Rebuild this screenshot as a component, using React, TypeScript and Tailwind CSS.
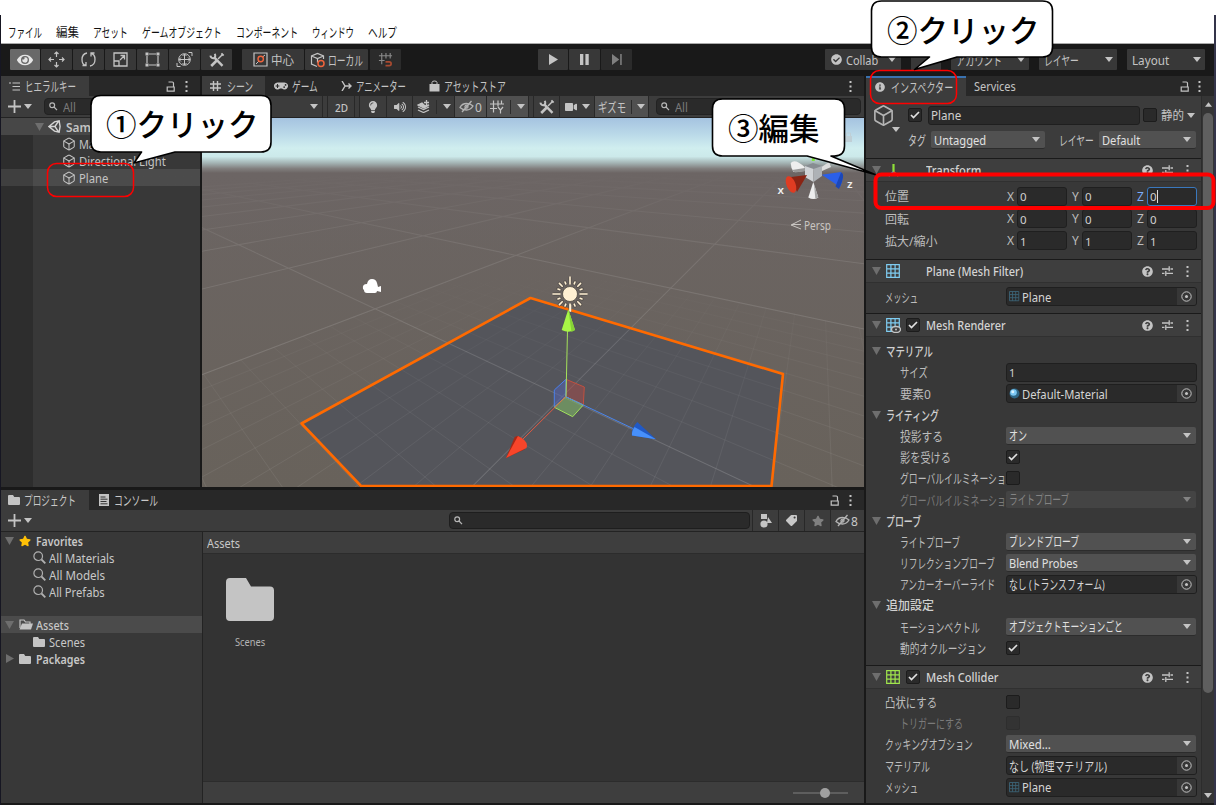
import React, { useLayoutEffect, useRef } from 'react';
import { FaEye, FaGamepad, FaInfoCircle, FaQuestionCircle, FaCheckCircle, FaLightbulb, FaVolumeUp, FaVideo, FaStar, FaTag } from 'react-icons/fa';
import { Box } from 'lucide-react';

/* Text that is condensed or widened to fill the width class it is given. Kana are set a little larger. */
function T({ c = '', children }: { c?: string; children: string }) {
  const outer = useRef<HTMLSpanElement>(null);
  const inner = useRef<HTMLSpanElement>(null);
  useLayoutEffect(() => {
    const o = outer.current;
    const i = inner.current;
    if (o && i && i.offsetWidth) i.style.transform = `scaleX(${o.clientWidth / i.offsetWidth})`;
  }, []);
  const kana = /[\u3041-\u30ff]/.test(children);
  return (
    <span ref={outer} className={`inline-block shrink-0 whitespace-nowrap pt-px ${c}`}>
      <span ref={inner} className={`inline-block origin-left ${kana ? 'text-[13px]' : ''}`}>{children}</span>
    </span>
  );
}

const Caret = ({ c = 'text-[#c4c4c4]' }: { c?: string }) => (
  <svg viewBox="0 0 8 5" className={`h-[5px] w-[8px] shrink-0 ${c}`}><path d="M0 0h8L4 5z" fill="currentColor" /></svg>
);
const Fold = () => (
  <svg viewBox="0 0 9 8" className="h-[8px] w-[9px] shrink-0 text-[#6e6e6e]"><path d="M0 0h9L4.5 8z" fill="currentColor" /></svg>
);
const Dots = () => (
  <svg viewBox="0 0 3 11" className="h-[11px] w-[3px] shrink-0" fill="#c4c4c4"><path d="M.5 0h2v2h-2zM.5 4.5h2v2h-2zM.5 9h2v2h-2z" /></svg>
);
const Lock = () => (
  <svg viewBox="0 0 10 11" className="h-[11px] w-[10px] shrink-0" fill="none" stroke="#c4c4c4" strokeWidth="1.2"><path d="M1.2 6h7v4.2h-7zM2.5 1h3.8q1.2 0 1.2 1.2V6" /></svg>
);
const Plus = () => (
  <svg viewBox="0 0 13 13" className="size-[13px] shrink-0"><path d="M6.500 0v13M0 6.500h13" stroke="#c4c4c4" strokeWidth="1.800" /></svg>
);
const Tools = () => (
  <svg viewBox="0 0 16 16" className="size-[16px] shrink-0" fill="none" stroke="#c4c4c4">
    <path d="M5 5.200l8.500 8.600" strokeWidth="2.400" /><path d="M1.400 3.600a3 3 0 003.600 2.600 3 3 0 00.6-4.400" strokeWidth="2" />
    <path d="M2.200 14L8 8.300" strokeWidth="2.600" /><path d="M9 7l5-5" strokeWidth="1.500" /><path d="M12.400 1.400l2.200 2.200" strokeWidth="1.800" />
  </svg>
);
const SearchMini = () => (
  <svg viewBox="0 0 10 9" className="h-[9px] w-[10px] shrink-0" fill="none" stroke="#b8b8b8" strokeWidth="1.200"><circle cx="3.200" cy="3.200" r="2.400" /><path d="M5 5l3 3.200" /></svg>
);
const SearchBig = () => (
  <svg viewBox="0 0 13 13" className="mb-[2px] size-[13px] shrink-0" fill="none" stroke="#b0b0b0"><circle cx="5.200" cy="5.200" r="4.300" strokeWidth="1.200" /><path d="M8.500 8.500l3.800 3.800" strokeWidth="1.800" /></svg>
);
const HiddenEye = () => (
  <svg viewBox="0 0 15 13" className="h-[13px] w-[15px] shrink-0" fill="none" stroke="#b4b4b4" strokeWidth="1.300">
    <path d="M1 7.500Q3 3.500 7.500 3.500 11.500 3.500 14 6 11.500 10 7.500 10 3.500 10 1 7.500z" /><path d="M12.500 1L3 12" /><circle cx="7.500" cy="6.700" r="1.500" />
  </svg>
);
const Folder = ({ c }: { c: string }) => (
  <svg viewBox="0 0 48 43" preserveAspectRatio="none" className={`shrink-0 ${c}`} fill="#c4c4c4"><path d="M4 0h16l5 8.500h19q4 0 4 4V39q0 4-4 4H4q-4 0-4-4V4q0-4 4-4z" /></svg>
);
const MeshGrid = ({ color, c, eye }: { color: string; c: string; eye?: boolean }) => (
  <svg viewBox="0 0 15 15" className={`shrink-0 ${c}`} fill="none" stroke={color}>
    <path d="M.7 .7h12.600v12.600H.7zM4.900 .7v12.600M9.100 .7v12.600M.7 4.900h12.600M.7 9.100h12.600" strokeWidth="1.200" />
    {eye && <><ellipse cx="10" cy="11.500" rx="4.500" ry="3" fill="#3e3e3e" stroke="#c4c4c4" strokeWidth="1.400" /><circle cx="10" cy="11.500" r="1" fill="#c4c4c4" stroke="none" /></>}
  </svg>
);
const Axes = () => (
  <svg viewBox="0 0 15 15" className="size-[15px] shrink-0" fill="none" strokeWidth="2.200"><path d="M7.500 1v8" stroke="#8fe03a" /><path d="M7.500 9l-5 4" stroke="#4a8ae0" /><path d="M7.500 9l5 4" stroke="#e0533a" /></svg>
);
const Sliders = () => (
  <svg viewBox="0 0 11 10" className="h-[10px] w-[11px] shrink-0" stroke="#c4c4c4" strokeWidth="1.300"><path d="M0 3h6.500M8.500 3H11M7.200 .3v5M0 7.300h2.500M4.500 7.300H11M3.800 5v5" /></svg>
);
const HashGrid = () => (
  <svg viewBox="0 0 14 13" className="h-[14px] w-[14px] shrink-0" fill="none" stroke="#c4c4c4" strokeWidth="1.200">
    <path d="M3.500 0v12M8 0v6M11.500 0v4M0 3.500h14M0 8h7M8 6.500l2.500 3v3.500M13 6.500l-2.500 3" />
  </svg>
);

const Check = ({ on, dim }: { on?: boolean; dim?: boolean }) => (
  <span className={`flex size-[14px] shrink-0 items-center justify-center rounded-[2px] border ${dim ? 'border-[#2e2e2e] bg-[#333]' : 'border-[#1c1c1c] bg-[#2a2a2a]'}`}>
    {on && <svg viewBox="0 0 10 8" className="h-[8px] w-[10px]" fill="none" stroke="#e0e0e0" strokeWidth="1.700"><path d="M1 4l2.500 2.500L9 1" /></svg>}
  </span>
);
const Select = ({ c, children, dim }: { c: string; children: React.ReactNode; dim?: boolean }) => (
  <span className={`flex h-[18px] shrink-0 items-center justify-between rounded-[2px] border-b pl-[3px] pr-[5px] ${c} ${dim ? 'border-[#383838] bg-[#444] text-[#838383]' : 'border-[#2c2c2c] bg-[#515151] text-[#e0e0e0]'}`}>
    {children}<Caret c={dim ? 'text-[#838383]' : 'text-[#c4c4c4]'} />
  </span>
);
const Field = ({ c, children, on }: { c: string; children?: React.ReactNode; on?: boolean }) => (
  <span className={`flex h-[19px] shrink-0 items-center rounded-[3px] border bg-[#2a2a2a] pl-[2px] text-[#d0d0d0] ${c} ${on ? 'border-[#3a78bd]' : 'border-[#1f1f1f]'}`}>{children}</span>
);
const ObjField = ({ children }: { children: React.ReactNode }) => (
  <span className="flex h-[19px] w-[191px] shrink-0 items-center gap-[2px] overflow-hidden rounded-[3px] border border-[#1f1f1f] bg-[#2a2a2a] pl-[2px] text-[#d4d4d4]">
    {children}
    <span className="ml-auto flex h-full w-[19px] items-center justify-center bg-[#373737]">
      <svg viewBox="0 0 11 11" className="size-[11px]" fill="none" stroke="#c4c4c4"><circle cx="5.500" cy="5.500" r="4.700" /><circle cx="5.500" cy="5.500" r="1.500" fill="#c4c4c4" stroke="none" /></svg>
    </span>
  </span>
);
const Row = ({ label, w, nest, dim, h = 'h-[21.2px]', children }: { label: string; w: string; nest?: boolean; dim?: boolean; h?: string; children?: React.ReactNode }) => (
  <div className={`flex items-center ${h} ${dim ? 'text-[#7a7a7a]' : 'text-[#bdbdbd]'}`}>
    <span className={`flex w-[140px] shrink-0 items-center overflow-hidden ${nest ? 'pl-[34px]' : 'pl-[19px]'}`}><T c={w}>{label}</T></span>
    {children}
  </div>
);
const FoldRow = ({ label, w }: { label: string; w: string }) => (
  <div className="flex h-[21.2px] items-center gap-[5px] pl-[6px] font-medium text-[#d0d0d0]"><Fold /><T c={w}>{label}</T></div>
);
const Head = ({ icon, title, w, check }: { icon: React.ReactNode; title: string; w: string; check?: boolean }) => (
  <div className="flex h-[24px] items-center border-b border-t border-b-[#303030] border-t-[#1a1a1a] bg-[#3e3e3e] pl-[6px] pr-[12px]">
    <Fold />
    <span className="ml-[5px] flex w-[20px]">{icon}</span>
    <span className="flex w-[20px]">{check && <Check on />}</span>
    <span className="flex font-medium text-[#d4d4d4]"><T c={w}>{title}</T></span>
    <span className="ml-auto flex items-center gap-[9px]"><FaQuestionCircle className="size-[11px] text-[#c4c4c4]" /><Sliders /><span className="flex w-[7px] justify-end"><Dots /></span></span>
  </div>
);
const Vec = ({ label, w, v, h, active }: { label: string; w: string; v: string; h: string; active?: boolean }) => (
  <Row label={label} w={w} h={h}>
    {['X', 'Y', 'Z'].map((a) => (
      <span key={a} className="flex w-[65px] shrink-0 items-center">
        <span className={`w-[11px] pl-px ${active && a === 'Z' ? 'text-[#7baefa]' : ''}`}>{a}</span>
        <Field c="w-[50px]" on={active && a === 'Z'}>
          <span className="pt-px text-[11.5px]">{v}</span>{active && a === 'Z' && <span className="h-[13px] w-px bg-[#ddd]" />}
        </Field>
      </span>
    ))}
  </Row>
);

function Inspector() {
  return (
    <section className="flex w-[348px] shrink-0 flex-col bg-[#383838]">
      <div className="flex h-[20px] shrink-0 items-center bg-[#282828] text-[#c4c4c4]">
        <div className="flex h-full w-[100px] items-center gap-[6px] border-t-2 border-[#3a72b0] bg-[#3c3c3c] pl-[9px]"><FaInfoCircle className="size-[10px]" /><T c="w-[62px]">インスペクター</T></div>
        <T c="ml-[8px] w-[42px]">Services</T>
        <span className="ml-auto mr-[13px] flex items-center gap-[8px]"><Lock /><Dots /></span>
      </div>
      <div className="flex min-h-0 flex-1">
        <div className="w-[335px] shrink-0">
          <div className="flex h-[62px] bg-[#3c3c3c] pt-[8px]">
            <div className="flex w-[42px] shrink-0 flex-col pl-[6px]">
              <Box className="size-[23px] text-[#b4b4b4]" strokeWidth={1.7} />
              <span className="ml-[20px] flex"><Caret /></span>
            </div>
            <div className="flex flex-col gap-[3px] text-[#c4c4c4]">
              <div className="flex h-[22px] items-center">
                <Check on />
                <Field c="ml-[6px] w-[212px]"><T c="w-[30px]">Plane</T></Field>
                <span className="ml-[3px] mr-[4px]"><Check /></span>
                <T c="w-[23px]">静的</T><span className="ml-[3px] flex"><Caret /></span>
              </div>
              <div className="flex h-[22px] items-center">
                <T c="w-[18px]">タグ</T>
                <span className="ml-[5px]"><Select c="w-[114px]"><T c="w-[52px]">Untagged</T></Select></span>
                <T c="ml-[14px] w-[35px]">レイヤー</T>
                <span className="ml-[5px]"><Select c="w-[97px]"><T c="w-[38px]">Default</T></Select></span>
              </div>
            </div>
          </div>
          <Head icon={<Axes />} title="Transform" w="w-[55px]" />
          <div className="h-[77px] pt-[3px]">
            <Vec label="位置" w="w-[24px]" v="0" h="h-[22px]" active />
            <Vec label="回転" w="w-[24px]" v="0" h="h-[23px]" />
            <Vec label="拡大/縮小" w="w-[52px]" v="1" h="h-[21px]" />
          </div>
          <Head icon={<MeshGrid color="#7fcdf2" c="size-[15px]" />} title="Plane (Mesh Filter)" w="w-[97px]" />
          <div className="h-[30px] pt-[3px]">
            <Row label="メッシュ" w="w-[33px]"><ObjField><MeshGrid color="#3c6478" c="size-[11px]" /><T c="w-[29px]">Plane</T></ObjField></Row>
          </div>
          <Head icon={<MeshGrid color="#7fcdf2" c="size-[15px]" eye />} title="Mesh Renderer" w="w-[80px]" check />
          <div className="h-[328px] pt-[3.6px]">
            <FoldRow label="マテリアル" w="w-[47px]" />
            <Row nest label="サイズ" w="w-[28px]"><Field c="w-[191px]"><span className="pt-px text-[11px]">1</span></Field></Row>
            <Row nest label="要素0" w="w-[31px]">
              <ObjField>
                <svg viewBox="0 0 11 11" className="size-[11px] shrink-0"><circle cx="5.500" cy="5.500" r="5" fill="#2f6685" /><circle cx="4.500" cy="4.500" r="3.300" fill="#7cc8f4" /><circle cx="3.800" cy="3.800" r="1.500" fill="#d9f2ff" /></svg>
                <T c="w-[86px]">Default-Material</T>
              </ObjField>
            </Row>
            <FoldRow label="ライティング" w="w-[53px]" />
            <Row nest label="投影する" w="w-[43px]"><Select c="w-[190px]"><T c="w-[18px]">オン</T></Select></Row>
            <Row nest label="影を受ける" w="w-[51px]"><Check on /></Row>
            <Row nest label="グローバルイルミネーショ" w="w-[106px]"><Check /></Row>
            <Row nest dim label="グローバルイルミネーショ" w="w-[106px]"><Select dim c="w-[190px]"><T c="w-[60px]">ライトプローブ</T></Select></Row>
            <FoldRow label="プローブ" w="w-[35px]" />
            <Row nest label="ライトプローブ" w="w-[60px]"><Select c="w-[190px]"><T c="w-[70px]">ブレンドプローブ</T></Select></Row>
            <Row nest label="リフレクションプローブ" w="w-[95px]"><Select c="w-[190px]"><T c="w-[69px]">Blend Probes</T></Select></Row>
            <Row nest label="アンカーオーバーライド" w="w-[95px]"><ObjField><T c="w-[96px]">なし (トランスフォーム)</T></ObjField></Row>
            <FoldRow label="追加設定" w="w-[48px]" />
            <Row nest label="モーションベクトル" w="w-[80px]"><Select c="w-[190px]"><T c="w-[114px]">オブジェクトモーションごと</T></Select></Row>
            <Row nest label="動的オクルージョン" w="w-[86px]"><Check on /></Row>
          </div>
          <Head icon={<MeshGrid color="#a0e64c" c="size-[15px]" />} title="Mesh Collider" w="w-[72px]" check />
          <div className="pt-[2px]">
            <Row h="h-[21.4px]" label="凸状にする" w="w-[52px]"><Check /></Row>
            <Row h="h-[21.4px]" nest dim label="トリガーにする" w="w-[63px]"><Check dim /></Row>
            <Row h="h-[21.4px]" label="クッキングオプション" w="w-[88px]"><Select c="w-[190px]"><T c="w-[42px]">Mixed...</T></Select></Row>
            <Row h="h-[21.4px]" label="マテリアル" w="w-[45px]"><ObjField><T c="w-[98px]">なし (物理マテリアル)</T></ObjField></Row>
            <Row h="h-[21.4px]" label="メッシュ" w="w-[33px]"><ObjField><MeshGrid color="#3c6478" c="size-[11px]" /><T c="w-[29px]">Plane</T></ObjField></Row>
          </div>
        </div>
        <div className="flex flex-1 flex-col items-center border-l border-[#2c2c2c] bg-[#353535] pb-[5px] pt-[6px]">
          <svg viewBox="0 0 8 5" className="h-[5px] w-[7px]"><path d="M0 5h8L4 0z" fill="#c4c4c4" /></svg>
          <div className="mt-[6px] h-[580px] w-[10px] rounded-[5px] bg-[#5f5f5f]" />
          <span className="mt-auto flex"><Caret /></span>
        </div>
      </div>
    </section>
  );
}

/* Ground plane projection: unit square (the 10 x 10 mesh) to screen. */
const quad = [[530, 298], [300, 423.5], [718, 872.3], [786.5, 373.5]];
const [[x0, y0], [x1, y1], [x2, y2], [x3, y3]] = quad;
const sx = x0 - x1 + x2 - x3;
const sy = y0 - y1 + y2 - y3;
const det = (x1 - x2) * (y3 - y2) - (x3 - x2) * (y1 - y2);
const gg = (sx * (y3 - y2) - (x3 - x2) * sy) / det;
const hh = ((x1 - x2) * sy - sx * (y1 - y2)) / det;
const depth = (u: number, v: number) => 1 + gg * u + hh * v;
const project = (u: number, v: number) => {
  const w = depth(u, v);
  return [((x1 - x0 + gg * x1) * u + (x3 - x0 + hh * x3) * v + x0) / w, ((y1 - y0 + gg * y1) * u + (y3 - y0 + hh * y3) * v + y0) / w];
};
const NEAR = 0.15;
function segment(a: number[], b: number[]) {
  const wa = depth(a[0], a[1]);
  const wb = depth(b[0], b[1]);
  if (wa < NEAR && wb < NEAR) return '';
  const t = (NEAR - wa) / (wb - wa);
  const m = [a[0] + (b[0] - a[0]) * t, a[1] + (b[1] - a[1]) * t];
  const p = project(...((wa < NEAR ? m : a) as [number, number]));
  const q = project(...((wb < NEAR ? m : b) as [number, number]));
  return `M${p[0].toFixed(1)} ${p[1].toFixed(1)}L${q[0].toFixed(1)} ${q[1].toFixed(1)}`;
}
function gridLines(step: number, from: number, to: number) {
  let d = '';
  for (let k = from; k <= to + 0.001; k += step) d += segment([k, from], [k, to]) + segment([from, k], [to, k]);
  return d;
}
const minor = gridLines(0.1, -0.5, 2.5);
const major = gridLines(1, -9.5, 4.5);
const rays = Array.from({ length: 16 }, (_, i) => i * 22.5);

function SceneView() {
  return (
    <svg viewBox="202 118 662 369" className="block h-[369px] w-[662px] shrink-0">
      <defs>
        <linearGradient id="sky" x1="0" y1="0" x2="0" y2="1">
          <stop offset="0" stopColor="#a5c3e0" /><stop offset=".28" stopColor="#b9d8e8" /><stop offset=".55" stopColor="#d0eeef" /><stop offset=".7" stopColor="#cce9ea" />
          <stop offset=".82" stopColor="#a3b3b3" /><stop offset=".92" stopColor="#817f7e" /><stop offset="1" stopColor="#6c6564" />
        </linearGradient>
        <linearGradient id="ground" x1="0" y1="0" x2="0" y2="1"><stop offset="0" stopColor="#6c6564" /><stop offset="1" stopColor="#68625b" /></linearGradient>
        <linearGradient id="fade" x1="0" y1="0" x2="0" y2="1"><stop offset="0" stopColor="#6c6564" /><stop offset=".25" stopColor="#6c6564" stopOpacity=".75" /><stop offset="1" stopColor="#6b6562" stopOpacity="0" /></linearGradient>
        <linearGradient id="near" x1="0" y1="0" x2="0" y2="1"><stop offset="0" stopColor="#fff" stopOpacity="0" /><stop offset="1" stopColor="#fff" stopOpacity=".055" /></linearGradient>
        <linearGradient id="minor" gradientUnits="userSpaceOnUse" x1="0" y1="270" x2="0" y2="487"><stop offset="0" stopColor="#fff" stopOpacity="0" /><stop offset=".4" stopColor="#fff" stopOpacity=".035" /><stop offset="1" stopColor="#fff" stopOpacity=".07" /></linearGradient>
      </defs>
      <rect x="202" y="118" width="662" height="369" fill="url(#ground)" />
      <path d="M530 298L300 423.500L360 487H771.500L783 374z" fill="#54555b" />
      <path d={minor} stroke="url(#minor)" strokeWidth="1" />
      <path d={major} stroke="#fff" strokeOpacity=".1" strokeWidth="1.100" />
      <rect x="202" y="172" width="662" height="90" fill="url(#fade)" />
      <rect x="202" y="118" width="662" height="55" fill="url(#sky)" />
      <path d="M530.500 298L301.500 423.500L361 486H771.500L783 374Z" fill="none" stroke="#ff6a00" strokeWidth="2.600" strokeLinejoin="round" />
      <path d="M363 289q-1-5 4-5 1-5 5-5t5 4l1 4 3-1v6l-4-1q0 2-2 2h-8q-3 0-3-3z" fill="#fff" />
      <g stroke="#4b4640" strokeWidth="3.400" strokeLinecap="round" opacity=".6">{rays.map((r, i) => <path key={r} d={i % 2 ? 'M570 283v-2' : i % 4 ? 'M570 283v-4' : 'M570 283v-5'} transform={`rotate(${r} 570 294)`} />)}</g>
      <g stroke="#fff0d2" strokeWidth="1.600" strokeLinecap="round">{rays.map((r, i) => <path key={r} d={i % 2 ? 'M570 283v-2' : i % 4 ? 'M570 283v-4' : 'M570 284v-7'} transform={`rotate(${r} 570 294)`} />)}<path d="M570.500 311v-6" /></g>
      <circle cx="570" cy="294" r="7.500" fill="#fff0d2" stroke="#4b4640" strokeWidth=".8" />
      <path d="M566 379.300L584.300 387 583.300 405 565.700 396.700z" fill="#b24a45" fillOpacity=".45" stroke="#c2503f" />
      <path d="M566 379.300L554.300 390V407.300L565.700 396.700z" fill="#5164b8" fillOpacity=".5" stroke="#4a80ec" />
      <path d="M565.700 396.700L583.300 405 572.700 416.700 554.300 407.300z" fill="#7fb365" fillOpacity=".6" stroke="#a0e05c" />
      <path d="M566 396.700L567.500 330" stroke="#a5e25a" /><path d="M565.700 396.700L520 442" stroke="#df5a43" /><path d="M565.700 396.700L634 429" stroke="#4a86ee" />
      <path d="M568.300 309.300L561.700 330q6.500 3.500 13.300 0z" fill="#a8f646" /><path d="M568.300 309.300L571.500 332 575 330z" fill="#86d336" />
      <path d="M506 458L514.500 437.500q3-4 7 2l3 10z" fill="#a92715" /><path d="M506 458L518 436q11 5 8.500 12z" fill="#f8452a" />
      <path d="M656 439.300L637.300 422q-6 6-5.500 13.500z" fill="#2159c4" /><path d="M656 439.300L634.500 427q-3 4-2.500 8.500z" fill="#4790fb" />
      <path d="M813.300 161v-4" stroke="#7fe53c" strokeWidth="3" />
      <path d="M790.700 163q4-5 14 4v4l-11 1q-3-4-3-9z" fill="#eee" /><path d="M792 170l13-2v3l-10 1.500z" fill="#999" /><path d="M820 168l9-6 2 5-9 4z" fill="#ddd" />
      <path d="M805 166l8-3 9 3-2 2-7 2z" fill="#888d92" /><path d="M805 166l8.500 3v13l-8.500-5z" fill="#d0d3d6" /><path d="M813.500 169l8.500-3v10l-8.500 6z" fill="#aeb2b6" />
      <path d="M813.300 182l-5 15.500q5 3 10 0z" fill="#ededed" /><path d="M814 184l4.300 13.500-3 1z" fill="#a5a5a5" />
      <path d="M807 175l-16 2 6 15z" fill="#8a2414" /><ellipse cx="791" cy="184.500" rx="4.500" ry="8.800" fill="#df3c22" transform="rotate(-22 791 184.500)" />
      <path d="M821.700 174.700L841 172q4 5-1 15z" fill="#2b5fe8" /><path d="M841 172.500q5 1-2 16.500l-3.500-2.500z" fill="#1b47b8" />
      <g fill="#eee" fontFamily="'Noto Sans', sans-serif" fontSize="11.500" fontWeight="600"><text x="777.500" y="194">x</text><text x="847" y="188">z</text></g>
      <path d="M801 220l-10 5 10 4M801 224.500h-9" stroke="#c9c5c1" fill="none" />
      <text x="804" y="230" fill="#c9c5c1" fontFamily="'Noto Sans', sans-serif" fontSize="12" textLength="27" lengthAdjust="spacingAndGlyphs">Persp</text>
      <g fill="#bfcfd6"><rect x="845" y="136" width="7" height="6" /><path d="M846.500 136v-3h4v3" fill="none" stroke="#bfcfd6" /></g>
    </svg>
  );
}

const Btn = ({ c = 'w-[31px]', bg = 'bg-[#383838]', children }: { c?: string; bg?: string; children?: React.ReactNode }) => (
  <span className={`flex h-[21px] shrink-0 items-center justify-center rounded-[1px] ${c} ${bg}`}>{children}</span>
);
const ic = 'size-[17px]';

function Toolbar() {
  return (
    <div className="flex h-[32px] shrink-0 items-center bg-[#191919] pb-px pl-[9px] text-[#c4c4c4]">
      <div className="flex gap-px">
        <Btn c="w-[30px]" bg="bg-[#696969]"><FaEye className="size-[16px] text-[#e6e6e6]" /></Btn>
        <Btn><svg viewBox="0 0 17 17" className={ic} fill="none" stroke="#c4c4c4" strokeWidth="1.200"><path d="M8.500 1v5M8.500 11v5M1 8.500h5M11 8.500h5M6.500 3l2-2 2 2M6.500 14l2 2 2-2M3 6.500l-2 2 2 2M14 6.500l2 2-2 2" /></svg></Btn>
        <Btn><svg viewBox="0 0 17 17" className={ic} fill="none" stroke="#c4c4c4" strokeWidth="1.300"><path d="M7 2Q2 3 2 8.500t4 6M2.500 14.500H6V11M10 15q5-1 5-6.500t-4-6M14.500 2H11v3.500" /></svg></Btn>
        <Btn><svg viewBox="0 0 17 17" className={ic} fill="none" stroke="#c4c4c4" strokeWidth="1.300"><path d="M2 2h13v13H2zM2 10h5v5M8 9l4.500-4.500M8.500 4.500h4v4" /></svg></Btn>
        <Btn><svg viewBox="0 0 17 17" className={ic} fill="none" stroke="#c4c4c4" strokeWidth="1.200"><path d="M3 5v7M14 5v7M5 3h7M5 14h7" /><path d="M1.500 1.500h3v3h-3zM12.500 1.500h3v3h-3zM1.500 12.500h3v3h-3zM12.500 12.500h3v3h-3z" fill="#c4c4c4" stroke="none" /></svg></Btn>
        <Btn><svg viewBox="0 0 17 17" className={ic} fill="none" stroke="#c4c4c4"><circle cx="8.500" cy="8.500" r="5.800" /><path d="M8.500 3v11M3 8.500h11M6.500 5l2-2 2 2M6.500 12l2 2 2-2M5 6.500l-2 2 2 2M12 6.500l2 2-2 2M12.500 1.500H16V5M1 12v3.500h3.500" /></svg></Btn>
        <Btn><Tools /></Btn>
      </div>
      <div className="ml-[10px] flex gap-[1px]">
        <Btn c="w-[62px] gap-[3px]">
          <svg viewBox="0 0 15 15" className="size-[15px] shrink-0" fill="none"><path d="M1 1h13v13H1z" stroke="#c4c4c4" strokeWidth="1.200" /><path d="M3 12l3-3M9.500 5L12 3" stroke="#c4c4c4" /><circle cx="7.700" cy="7" r="2.700" stroke="#f0643c" strokeWidth="1.400" /></svg>
          <T c="w-[23px]">中心</T>
        </Btn>
        <Btn c="w-[63px] gap-[2px]">
          <svg viewBox="0 0 16 16" className="size-[16px] shrink-0" fill="none" stroke="#c4c4c4" strokeWidth="1.200"><path d="M7 14.500L1.500 12V4L7.500 1.500 13.500 4v3M1.500 4l6 2.500 6-2.500M7.500 6.500v4" /><circle cx="11" cy="11.500" r="3" stroke="#f0643c" strokeWidth="1.500" /></svg>
          <T c="w-[35px]">ローカル</T>
        </Btn>
        <span className="ml-px flex"><Btn bg="bg-[#2b2b2b]"><svg viewBox="0 0 16 16" className="size-[15px]" fill="none" stroke="#8a8a8a" strokeWidth="1.200"><path d="M4 1v12M8.500 1v6M13 1v6M1 4h14M1 9h6" /><path d="M8 10.500h4q2 0 2 2t-2 2H8" stroke="#a84a30" strokeWidth="1.800" /></svg></Btn></span>
      </div>
      <div className="ml-[137px] flex gap-px">
        <Btn c="w-[30px]"><svg viewBox="0 0 10 12" className="h-[11px] w-[9px]"><path d="M0 0l10 6-10 6z" fill="#c4c4c4" /></svg></Btn>
        <Btn><svg viewBox="0 0 10 12" className="h-[11px] w-[9px]"><path d="M0 0h3.700v12H0zM6 0h3.700v12H6z" fill="#c4c4c4" /></svg></Btn>
        <Btn bg="bg-[#2b2b2b]"><svg viewBox="0 0 11 12" className="h-[11px] w-[10px]"><path d="M0 0l8 6-8 6zM9 0h1.700v12H9z" fill="#808080" /></svg></Btn>
      </div>
      <div className="ml-[193px] flex gap-[10px]">
        <Btn c="w-[76px] gap-[4px]"><FaCheckCircle className="size-[11px]" /><T c="w-[32px]">Collab</T><span className="ml-[6px] flex"><Caret /></span></Btn>
        <Btn c="w-[30px]" />
        <Btn c="w-[78px] gap-[15px]"><T c="w-[46px]">アカウント</T><Caret /></Btn>
        <Btn c="w-[78px] gap-[26px]"><T c="w-[35px]">レイヤー</T><Caret /></Btn>
        <Btn c="w-[78px] gap-[24px]"><T c="w-[37px]">Layout</T><Caret /></Btn>
      </div>
    </div>
  );
}

function Hierarchy() {
  return (
    <section className="flex w-[199px] shrink-0 flex-col bg-[#383838] text-[#c4c4c4]">
      <div className="flex h-[20px] shrink-0 items-center bg-[#282828]">
        <div className="flex h-full w-[88px] items-center gap-[5px] bg-[#3c3c3c] pl-[8px]">
          <svg viewBox="0 0 11 9" className="h-[9px] w-[11px]" stroke="#c4c4c4" strokeWidth="1.200"><path d="M0 1h2M3.500 1H11M3.500 4.500H11M3.500 8H11" /></svg>
          <T c="w-[51px]">ヒエラルキー</T>
        </div>
        <span className="ml-auto mr-[12px] flex items-center gap-[9px]"><Lock /><Dots /></span>
      </div>
      <div className="flex h-[22px] shrink-0 items-center border-b border-[#232323] bg-[#3c3c3c] pl-[7px]">
        <Plus /><span className="ml-[3px] flex"><Caret /></span>
        <span className="ml-[12px] flex h-[17px] w-[150px] items-center gap-[4px] rounded-[4px] border border-[#222] bg-[#2a2a2a] pl-[4px] text-[#7a7a7a]"><SearchMini /><T c="w-[13px]">All</T></span>
      </div>
      <div className="flex flex-1 flex-col bg-linear-to-r from-[#2d2d2d] from-[32px] to-[#383838] to-[32px]">
        <div className="flex h-[17px] items-center bg-[#474747] pl-[34px] font-semibold">
          <Fold />
          <svg viewBox="0 0 14 14" className="ml-[4px] size-[13px]" fill="none" stroke="#d4d4d4" strokeWidth="1.500"><path d="M1 7l6-5 5-1 1 6-1 6-5-1zM1 7h6.500M7.500 7l4-6M7.500 7l4 6" /></svg>
          <T c="ml-[5px] w-[76px]">SampleScene</T>
        </div>
        <div className="flex h-[17px] items-center gap-[3px] pl-[61px]"><Box className="size-[14px]" strokeWidth={1.8} /><T c="w-[68px]">Main Camera</T></div>
        <div className="flex h-[17px] items-center gap-[3px] pl-[61px]"><Box className="size-[14px]" strokeWidth={1.8} /><T c="w-[87px]">Directional Light</T></div>
        <div className="flex h-[17px] items-center gap-[3px] bg-linear-to-r from-[#3f3f3f] from-[32px] to-[#4b4b4b] to-[32px] pl-[61px]"><Box className="size-[14px]" strokeWidth={1.8} /><T c="w-[29px]">Plane</T></div>
      </div>
    </section>
  );
}

const Cell = ({ c, on, children }: { c: string; on?: boolean; children?: React.ReactNode }) => (
  <span className={`flex h-full shrink-0 items-center justify-center border-r border-[#282828] ${c} ${on ? 'bg-[#505050]' : 'bg-[#3c3c3c]'}`}>{children}</span>
);
const Bar = () => <span className="h-[14px] w-px shrink-0 bg-[#2c2c2c]" />;

function Scene() {
  return (
    <section className="flex w-[662px] shrink-0 flex-col bg-[#3c3c3c] text-[#c4c4c4]">
      <div className="flex h-[20px] shrink-0 items-center bg-[#282828]">
        <div className="flex h-full w-[63px] items-center gap-[6px] bg-[#3c3c3c] pl-[8px]">
          <svg viewBox="0 0 11 10" className="h-[10px] w-[11px]" stroke="#c4c4c4" strokeWidth="1.400"><path d="M3.500 0v10M7.500 0v10M0 3h11M0 7h11" /></svg><T c="w-[26px]">シーン</T>
        </div>
        <FaGamepad className="ml-[9px] size-[14px]" /><T c="ml-[4px] w-[26px]">ゲーム</T>
        <svg viewBox="0 0 11 10" className="ml-[23px] h-[10px] w-[11px]" fill="none" stroke="#c4c4c4" strokeWidth="1.400"><path d="M1 0l3 5-3 5M4 5h6M7.500 2.500L10 5 7.500 7.500" /></svg><T c="ml-[4px] w-[50px]">アニメーター</T>
        <svg viewBox="0 0 11 12" className="ml-[23px] h-[12px] w-[11px]" fill="none"><path d="M.5 4h10v7.500H.5z" fill="#c4c4c4" /><path d="M3 6V2.500Q3 1 5.500 1T8 2.500V6" stroke="#c4c4c4" /></svg><T c="ml-[4px] w-[62px]">アセットストア</T>
        <span className="ml-auto mr-[12px] flex"><Dots /></span>
      </div>
      <div className="flex h-[22px] shrink-0 items-center border-b border-[#232323]">
        <Cell c="w-[121px] justify-end! pr-[4px]"><Caret /></Cell><Cell c="w-[5px]" />
        <Cell c="w-[27px] text-[11.5px] font-medium"><T c="w-[13px]">2D</T></Cell><Cell c="w-[5px]" />
        <Cell c="w-[27px]"><FaLightbulb className="size-[12px]" /></Cell>
        <Cell c="w-[26px]"><FaVolumeUp className="size-[12px]" /></Cell>
        <Cell c="w-[42px] gap-[6px]"><svg viewBox="0 0 13 13" className="size-[13px]" fill="none" stroke="#c4c4c4" strokeWidth="1.300"><path d="M1 7l5.500 2.500L12 7M1 10l5.500 2.500L12 10" /><path d="M1 5l4-2 3 3 4-1-5 3z" fill="#c4c4c4" /><path d="M9.500 0v5M7 2.500h5" /></svg><Bar /><Caret /></Cell>
        <Cell on c="w-[32px] gap-[1px]"><HiddenEye /><T c="w-[7px]">0</T></Cell>
        <Cell on c="w-[42px] gap-[6px]"><HashGrid /><Bar /><Caret /></Cell>
        <Cell c="w-[5px]" />
        <Cell c="w-[26px]"><Tools /></Cell>
        <Cell c="w-[35px] gap-[5px]"><FaVideo className="size-[12px]" /><Caret /></Cell>
        <Cell on c="w-[54px] gap-[5px]"><T c="w-[28px]">ギズモ</T><Bar /><Caret /></Cell>
        <span className="ml-[7px] flex h-[17px] w-[205px] items-center gap-[4px] rounded-[4px] border border-[#222] bg-[#2a2a2a] pl-[4px] text-[#7a7a7a]"><SearchMini /><T c="w-[13px]">All</T></span>
      </div>
      <SceneView />
    </section>
  );
}

function Project() {
  return (
    <section className="flex h-[313px] shrink-0 flex-col bg-[#383838] text-[#c8c8c8]">
      <div className="flex h-[20px] shrink-0 items-center bg-[#282828]">
        <div className="flex h-full w-[88px] items-center gap-[4px] bg-[#3c3c3c] pl-[7px]"><Folder c="h-[10px] w-[12px]" /><T c="w-[52px]">プロジェクト</T></div>
        <svg viewBox="0 0 10 12" className="ml-[10px] h-[12px] w-[10px]"><path d="M0 0h10v12H0z" fill="#c4c4c4" /><path d="M1.500 3h5M1.500 5.200h7M1.500 7.500h6M1.500 9.800h7" stroke="#333" /></svg><T c="ml-[5px] w-[44px]">コンソール</T>
        <span className="ml-auto mr-[12px] flex items-center gap-[9px]"><Lock /><Dots /></span>
      </div>
      <div className="flex h-[22px] shrink-0 items-center border-b border-[#232323] bg-[#3c3c3c] pl-[7px]">
        <Plus /><span className="ml-[3px] flex"><Caret /></span>
        <span className="ml-auto mr-[2px] flex h-[17px] w-[301px] items-center rounded-[4px] border border-[#1e1e1e] bg-[#2a2a2a] pl-[4px]"><SearchMini /></span>
        <span className="flex h-full border-l border-[#282828]">
          <Cell c="w-[26px]"><svg viewBox="0 0 12 14" className="h-[14px] w-[12px]" fill="#c4c4c4"><path d="M1 0h6v5H1zM8 3l4 6H7z" /><circle cx="4" cy="10" r="3.600" /></svg></Cell>
          <Cell c="w-[26px]"><FaTag className="size-[11px] -scale-x-100" /></Cell>
          <Cell c="w-[26px]"><FaStar className="size-[12px] text-[#808080]" /></Cell>
          <Cell c="w-[33px] border-r-0 gap-[1px] pr-[2px]"><HiddenEye /><T c="w-[7px]">8</T></Cell>
        </span>
      </div>
      <div className="flex min-h-0 flex-1">
        <div className="w-[202px] shrink-0 border-r border-[#232323] pt-[0.5px]">
          <div className="flex h-[17px] items-center pl-[4px] font-semibold"><Fold /><FaStar className="ml-[5px] size-[12px] text-[#ffc107]" /><T c="ml-[5px] w-[47px]">Favorites</T></div>
          <div className="flex h-[17px] items-center gap-[3px] pl-[32px]"><SearchBig /><T c="w-[65px]">All Materials</T></div>
          <div className="flex h-[17px] items-center gap-[3px] pl-[32px]"><SearchBig /><T c="w-[56px]">All Models</T></div>
          <div className="flex h-[17px] items-center gap-[3px] pl-[32px]"><SearchBig /><T c="w-[56px]">All Prefabs</T></div>
          <div className="mt-[15.5px] flex h-[17px] items-center bg-[#4b4b4b] pl-[4px] font-medium"><Fold />
            <svg viewBox="0 0 14 11" className="ml-[5px] h-[11px] w-[14px]"><path d="M1 9V1h4l1.500 2H11v2" fill="none" stroke="#c4c4c4" strokeWidth="1.200" /><path d="M3 4.500h11L12 10.500H.5z" fill="#c4c4c4" /></svg><T c="ml-[3px] w-[33px]">Assets</T></div>
          <div className="flex h-[17px] items-center gap-[4px] pl-[32px]"><Folder c="h-[10px] w-[12px]" /><T c="w-[36px]">Scenes</T></div>
          <div className="flex h-[17px] items-center pl-[5px] font-semibold"><svg viewBox="0 0 8 9" className="h-[9px] w-[8px]"><path d="M0 0v9l8-4.500z" fill="#6e6e6e" /></svg><Folder c="ml-[5px] h-[10px] w-[12px]" /><T c="ml-[5px] w-[49px]">Packages</T></div>
        </div>
        <div className="flex flex-1 flex-col bg-[#333]">
          <div className="flex h-[22px] shrink-0 items-center border-b border-[#2c2c2c] bg-[#3e3e3e] pl-[4px]"><T c="w-[33px]">Assets</T></div>
          <div className="flex flex-1 flex-col items-start pl-[23px] pt-[24px]">
            <Folder c="h-[43px] w-[48px]" />
            <span className="mt-[12px] flex w-[48px] justify-center text-[10.5px] text-[#b4b4b4]"><T c="w-[30px]">Scenes</T></span>
          </div>
          <div className="flex h-[22px] shrink-0 items-center justify-end border-t border-[#2c2c2c] bg-[#3e3e3e] pr-[16px]">
            <span className="flex h-[2px] w-[55px] items-center justify-center bg-[#5e5e5e]"><span className="ml-[9px] size-[10px] shrink-0 rounded-full bg-[#a0a0a0]" /></span>
          </div>
        </div>
      </div>
    </section>
  );
}

function Annotations() {
  return (
    <div className="pointer-events-none absolute inset-0 font-medium text-black">
      <svg viewBox="0 0 1216 805" className="absolute inset-0 h-[805px] w-[1216px]" fill="none" stroke="#f00">
        <rect x="47.500" y="163.500" width="86" height="33" rx="9" strokeWidth="1.500" />
        <rect x="870.500" y="70.500" width="86" height="33" rx="9" strokeWidth="1.500" />
        <rect x="875.500" y="174.500" width="338" height="33.500" rx="6" strokeWidth="4" />
        <g fill="#fff" stroke="#000" strokeWidth="1.600" strokeLinejoin="round">
          <path d="M101 95.500H261q10 0 10 10V142q0 10-10 10H175L134 163l7.500-11H101q-10 0-10-10V105.500q0-10 10-10z" />
          <path d="M881.500 1H1042.500q10 0 10 10V47q0 10-10 10H957L914.500 69.500l15-12.500H881.500q-10 0-10-10V11q0-10 10-10z" />
          <path d="M722.500 99H834.500q10 0 10 10V146q0 10-10 10H831L875 174.500 807 156H722.500q-10 0-10-10V109q0-10 10-10z" />
        </g>
      </svg>
      <span className="absolute left-[106px] top-[104px] whitespace-nowrap text-[30.5px] leading-[40px]">①クリック</span>
      <span className="absolute left-[887px] top-[10px] whitespace-nowrap text-[30.5px] leading-[40px]">②クリック</span>
      <span className="absolute left-[728px] top-[108px] whitespace-nowrap text-[30.5px] leading-[40px]">③編集</span>
    </div>
  );
}

const menu: [string, string][] = [
  ['ファイル', 'w-[34px]'], ['編集', 'w-[23px]'], ['アセット', 'w-[35px]'], ['ゲームオブジェクト', 'w-[80px]'],
  ['コンポーネント', 'w-[62px]'], ['ウィンドウ', 'w-[42px]'], ['ヘルプ', 'w-[29px]'],
];

export default function App() {
  return (
    <div className="relative flex h-[805px] w-[1216px] flex-col overflow-hidden bg-white font-['Noto_Sans','Noto_Sans_CJK_JP',sans-serif] text-[12px] leading-[17px]">
      <div className="h-[15px] shrink-0" />
      <div className="flex min-h-0 flex-1 flex-col border-l border-r-2 border-l-[#161622] border-r-[#34344a]">
        <nav className="flex h-[29px] shrink-0 items-center gap-[14px] border-b border-[#aaa] bg-white pl-[7px] pt-[6px] text-[#111]">
          {menu.map(([label, w]) => <T key={label} c={w}>{label}</T>)}
        </nav>
        <Toolbar />
        <div className="flex min-h-0 flex-1 gap-[2px] bg-[#191919] pb-[2px]">
          <div className="flex w-[863px] shrink-0 flex-col gap-[3px]">
            <div className="flex h-[411px] shrink-0 gap-[2px]"><Hierarchy /><Scene /></div>
            <Project />
          </div>
          <Inspector />
        </div>
      </div>
      <Annotations />
    </div>
  );
}
